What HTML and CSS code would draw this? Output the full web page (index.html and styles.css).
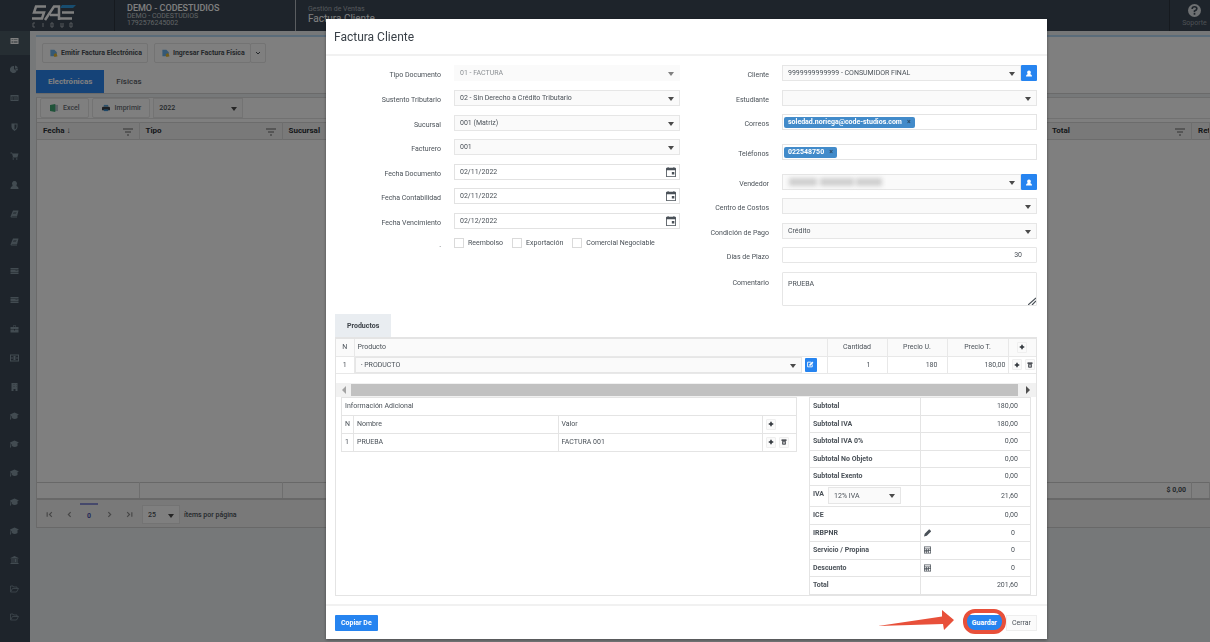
FILE: index.html
```html
<!DOCTYPE html>
<html lang="es">
<head>
<meta charset="utf-8">
<title>Factura Cliente</title>
<link rel="stylesheet" href="styles.css">
</head>
<body>
<svg class="sprite" aria-hidden="true">
  <symbol id="i-card" viewBox="0 0 16 16"><path d="M0 2h16v12H0zM2 5v1h3V5zm4 0v1h8V5zM2 8v1h3V8zm4 0v1h8V8zm-4 3v1h3v-1zm4 0v1h8v-1z" fill-rule="evenodd"/></symbol>
  <symbol id="i-pie" viewBox="0 0 16 16"><path d="M7 2v6l5 4A7 7 0 1 1 7 2zm2-1a7 7 0 0 1 6 6H9zM9 8h6a7 7 0 0 1-2 4z"/></symbol>
  <symbol id="i-list" viewBox="0 0 16 16"><path d="M0 2h16v12H0zm2 3v7h12V5zm1 1h2v1H3zm3 0h7v1H6zM3 8h2v1H3zm3 0h7v1H6zm-3 2h2v1H3zm3 0h7v1H6z" fill-rule="evenodd"/></symbol>
  <symbol id="i-shield" viewBox="0 0 16 16"><path d="M2 1h12v7q0 5-6 8-6-3-6-8zm6 2v10q4-2 4-5V3z" fill-rule="evenodd"/></symbol>
  <symbol id="i-cart" viewBox="0 0 16 16"><path d="M0 1h3l1 2h12l-2 7H5l0 1h9v1H4L5 10 3 3H0z"/><circle cx="5.500" cy="14" r="1.500"/><circle cx="12.500" cy="14" r="1.500"/></symbol>
  <symbol id="i-user" viewBox="0 0 16 16"><path d="M8 0a5 5 0 0 1 4 8l0 2q4 1 4 5v1H0v-1q0-4 4-5l0-2a5 5 0 0 1 4-8z"/></symbol>
  <symbol id="i-book" viewBox="0 0 16 16"><path d="M5 1h11l-3 12H3q-1 0-1 1h11v1H2q-2 0-2-2zm1 3v1h6V4zm-1 3v1h6V7z" fill-rule="evenodd"/></symbol>
  <symbol id="i-server" viewBox="0 0 16 16"><path d="M0 2h16v3H0zm0 4h16v4H0zm0 5h16v3H0zm10-4v1h4V7z" fill-rule="evenodd"/></symbol>
  <symbol id="i-case" viewBox="0 0 16 16"><path d="M5 4V1h6v3h5v5H9V8H7v1H0V4zm1-2v2h4V2zM0 10h7v1h2v-1h7v5H0z" fill-rule="evenodd"/></symbol>
  <symbol id="i-money" viewBox="0 0 18 14"><path d="M0 0h18v14H0zm2 2v10h14V2zm5 1h4v8H7zM3 5h2v4H3zm10 0h2v4h-2z" fill-rule="evenodd"/></symbol>
  <symbol id="i-building" viewBox="0 0 16 16"><path d="M2 0h12v16h-4v-4H6v4H2zm3 3v1h1V3zm3 0v1h1V3zm3 0v1h1V3zM5 7v1h1V7zm3 0v1h1V7zm3 0v1h1V7z" fill-rule="evenodd"/></symbol>
  <symbol id="i-cap" viewBox="0 0 18 14"><path d="M9 0l9 4-3 1v6q-6 4-11 0V7H3l-1 7H0l1-8-1-2z"/></symbol>
  <symbol id="i-bank" viewBox="0 0 16 16"><path d="M8 0l8 4v1H0V4zM2 6h2v6h2V6h2v6h1V6h2v6h1V6h2v6h1v1H1v-1h1zM0 14h16v2H0z"/></symbol>
  <symbol id="i-folder" viewBox="0 0 18 14"><path d="M1 12V1h5l1 2h7v3M1 13l4-7h12l-4 7z" fill="none" stroke="currentColor" stroke-width="1.500"/></symbol>
  <symbol id="i-filter" viewBox="0 0 10 8"><path d="M0 1h10M2 4h6M4 7h2" stroke="currentColor" fill="none"/></symbol>
  <symbol id="i-doc" viewBox="0 0 9 10"><path d="M0 1h5l3 3v5H0z" fill="#6db2ea"/><path d="M4 7l3-2 2 4-4 1z" fill="#eab92d"/></symbol>
  <symbol id="i-cal" viewBox="0 0 12 12"><path d="M2 0h1v1h6V0h1v1h1q1 0 1 1v9q0 1-1 1H1q-1 0-1-1V2q0-1 1-1h1zm-1 4v7h10V4zm6 2h3v3H7z" fill-rule="evenodd"/></symbol>
  <symbol id="i-plus" viewBox="0 0 8 8"><path d="M3 1h2v2h2v2H5v2H3V5H1V3h2z"/></symbol>
  <symbol id="i-trash" viewBox="0 0 8 8"><path d="M1 1h6v1H1zm1 2h4v4H2z" fill="none" stroke="currentColor"/><path d="M4 3v4" stroke="currentColor"/></symbol>
  <symbol id="i-calc" viewBox="0 0 10 10"><path d="M0 0h10v10H0zm1 1v2h8V1zm0 3v1h2V4zm3 0v1h2V4zm3 0v1h2V4zM1 6v1h2V6zm3 0v1h2V6zm3 0v3h2V6zM1 8v1h2V8zm3 0v1h2V8z" fill-rule="evenodd"/></symbol>
  <symbol id="i-pencil" viewBox="0 0 10 10"><path d="M0 10l1-4 5-5 3 3-5 5zM7 0l1 0 2 2v1L9 4 6 1z"/></symbol>
  <symbol id="i-edit" viewBox="0 0 12 12"><path d="M9 6v4H1V2h6" fill="none" stroke="currentColor" stroke-width="1.500"/><path d="M4 8V6l5-5 2 2-5 5z"/></symbol>
</svg>

<div class="app">
  <header class="topbar">
    <div class="topbar__logo">
      <svg viewBox="0 0 44 23" class="logo" role="img" aria-label="SAE Cloud">
        <g fill="none" stroke="#fff" stroke-width="2.500">
          <path d="M14 1.500H4L2 7.500h10l-2 6H0"/>
          <path d="M13 15L22 1.500h5V15M18 10h9"/>
          <path d="M42 7.500H30M40 13.500H28"/>
        </g>
        <path d="M30 0h14l-3 3H28z" fill="#2f9be0"/>
        <g fill="none" stroke="#aab1b8">
          <path d="M3 18H1v4h2M11 18v4M21 18h-2v4h2zM29 18v4h2v-4M38 18h2v4h-2z"/>
        </g>
      </svg>
    </div>
    <div class="topbar__company">
      <strong>DEMO - CODESTUDIOS</strong>
      <span>DEMO - CODESTUDIOS</span>
      <span>1792576245002</span>
    </div>
    <div class="topbar__page">
      <span>Gestión de Ventas</span>
      <strong>Factura Cliente</strong>
    </div>
    <a class="topbar__help" href="#soporte">
      <svg viewBox="0 0 14 14"><circle cx="7" cy="7" r="7" fill="currentColor"/><path d="M4.500 5.500q0-2.500 2.500-2.500t2.500 2q0 1.500-2.500 2.500v1M7 9.500v2" fill="none" stroke="#3c4856" stroke-width="1.800"/></svg>
      Soporte
    </a>
  </header>

  <div class="shell">
    <nav class="side" aria-label="Menú">
      <a href="#m1" class="side__item side__item--on"><svg><use href="#i-card"/></svg></a>
      <a href="#m2" class="side__item"><svg><use href="#i-pie"/></svg></a>
      <a href="#m3" class="side__item"><svg><use href="#i-list"/></svg></a>
      <a href="#m4" class="side__item"><svg><use href="#i-shield"/></svg></a>
      <a href="#m5" class="side__item"><svg><use href="#i-cart"/></svg></a>
      <a href="#m6" class="side__item"><svg><use href="#i-user"/></svg></a>
      <a href="#m7" class="side__item"><svg><use href="#i-book"/></svg></a>
      <a href="#m8" class="side__item"><svg><use href="#i-book"/></svg></a>
      <a href="#m9" class="side__item"><svg><use href="#i-server"/></svg></a>
      <a href="#m10" class="side__item"><svg><use href="#i-server"/></svg></a>
      <a href="#m11" class="side__item"><svg><use href="#i-case"/></svg></a>
      <a href="#m12" class="side__item"><svg><use href="#i-money"/></svg></a>
      <a href="#m13" class="side__item"><svg><use href="#i-building"/></svg></a>
      <a href="#m14" class="side__item"><svg><use href="#i-cap"/></svg></a>
      <a href="#m15" class="side__item"><svg><use href="#i-cap"/></svg></a>
      <a href="#m16" class="side__item"><svg><use href="#i-cap"/></svg></a>
      <a href="#m17" class="side__item"><svg><use href="#i-cap"/></svg></a>
      <a href="#m18" class="side__item"><svg><use href="#i-cap"/></svg></a>
      <a href="#m19" class="side__item"><svg><use href="#i-bank"/></svg></a>
      <a href="#m20" class="side__item"><svg><use href="#i-folder"/></svg></a>
      <a href="#m21" class="side__item"><svg><use href="#i-folder"/></svg></a>
    </nav>

    <main class="content">
      <section class="actions">
        <div class="actions__row">
          <button class="tool" type="button"><svg><use href="#i-doc"/></svg>Emitir Factura Electrónica</button>
          <div class="split">
            <button class="tool" type="button"><svg><use href="#i-doc"/></svg>Ingresar Factura Física</button>
            <button class="tool tool--more" type="button" aria-label="Más"><svg viewBox="0 0 8 8"><path d="M2 3l2 2 2-2" fill="none" stroke="currentColor"/></svg></button>
          </div>
        </div>
        <div class="tabs">
          <button class="tabs__tab tabs__tab--on" type="button">Electrónicas</button>
          <button class="tabs__tab" type="button">Físicas</button>
        </div>
      </section>

      <section class="grid">
        <div class="grid__tools">
          <button class="tool tool--light" type="button"><svg viewBox="0 0 9 9"><path d="M5 1h4v7H5z" fill="#b9c3ce"/><path d="M0 1l6-1v9l-6-1z" fill="#3fa673"/></svg>Excel</button>
          <button class="tool tool--light" type="button"><svg viewBox="0 0 9 9"><path d="M2 1h5v2H2z" fill="#5aa6de"/><path d="M0 4l1-1h7l1 1v3H0z" fill="#3c434b"/><path d="M2 6h5v2H2z" fill="#3a8fd0"/></svg>Imprimir</button>
          <span class="pick pick--year"><select aria-label="Año"><option>2022</option></select></span>
        </div>
        <table class="grid__head">
          <colgroup><col class="c-fecha"><col class="c-tipo"><col><col class="c-total"><col class="c-ret"></colgroup>
          <tr>
            <th><span>Fecha <i>↓</i></span><svg><use href="#i-filter"/></svg></th>
            <th><span>Tipo</span><svg><use href="#i-filter"/></svg></th>
            <th><span>Sucursal</span></th>
            <th><span>Total</span><svg><use href="#i-filter"/></svg></th>
            <th><span>Ret</span></th>
          </tr>
        </table>
        <div class="grid__body"></div>
        <table class="grid__foot">
          <colgroup><col class="c-fecha"><col class="c-tipo"><col><col class="c-total"><col class="c-ret"></colgroup>
          <tr><td></td><td></td><td></td><td>$ 0,00</td><td></td></tr>
        </table>
        <div class="pager">
          <button type="button" aria-label="Primera"><svg viewBox="0 0 6 6"><path d="M1 1v4M5 1L3 3l2 2" /></svg></button>
          <button type="button" aria-label="Anterior"><svg viewBox="0 0 6 6"><path d="M4 1L2 3l2 2" /></svg></button>
          <button type="button" class="pager__now">0</button>
          <button type="button" aria-label="Siguiente"><svg viewBox="0 0 6 6"><path d="M2 1l2 2-2 2" /></svg></button>
          <button type="button" aria-label="Última"><svg viewBox="0 0 6 6"><path d="M1 1l2 2-2 2M5 1v4" /></svg></button>
          <span class="pick pick--size"><select id="size"><option>25</option></select></span>
          <label for="size">ítems por página</label>
        </div>
      </section>
    </main>
  </div>
</div>

<div class="overlay">
  <div class="modal" role="dialog" aria-labelledby="modal-title">
    <header class="modal__head"><h1 id="modal-title">Factura Cliente</h1></header>

    <div class="modal__body">
      <form class="form">
        <div class="form__col">
          <div class="row row--a"><label for="tipo">Tipo Documento</label><span class="pick pick--off"><select id="tipo" disabled><option>01 - FACTURA</option></select></span></div>
          <div class="row row--a"><label for="sustento">Sustento Tributario</label><span class="pick"><select id="sustento"><option>02 - Sin Derecho a Crédito Tributario</option></select></span></div>
          <div class="row"><label for="sucursal">Sucursal</label><span class="pick"><select id="sucursal"><option>001 (Matriz)</option></select></span></div>
          <div class="row row--a"><label for="facturero">Facturero</label><span class="pick"><select id="facturero"><option>001</option></select></span></div>
          <div class="row"><label for="fdoc">Fecha Documento</label><span class="date"><input id="fdoc" type="text" value="02/11/2022"><button type="button" aria-label="Calendario"><svg><use href="#i-cal"/></svg></button></span></div>
          <div class="row row--a"><label for="fcon">Fecha Contabilidad</label><span class="date"><input id="fcon" type="text" value="02/11/2022"><button type="button" aria-label="Calendario"><svg><use href="#i-cal"/></svg></button></span></div>
          <div class="row"><label for="fven">Fecha Vencimiento</label><span class="date"><input id="fven" type="text" value="02/12/2022"><button type="button" aria-label="Calendario"><svg><use href="#i-cal"/></svg></button></span></div>
          <div class="row row--checks"><span class="dot">.</span>
            <div class="checks">
              <label><input type="checkbox">Reembolso</label>
              <label><input type="checkbox">Exportación</label>
              <label><input type="checkbox">Comercial Negociable</label>
            </div>
          </div>
        </div>

        <div class="form__col form__col--right">
          <div class="row row--a"><label for="cliente">Cliente</label><span class="join"><span class="pick"><select id="cliente"><option>9999999999999 - CONSUMIDOR FINAL</option></select></span><button type="button" class="blue blue--icon" aria-label="Ver cliente"><svg><use href="#i-user"/></svg></button></span></div>
          <div class="row"><label for="estudiante">Estudiante</label><span class="pick"><select id="estudiante"><option></option></select></span></div>
          <div class="row row--c"><span class="row__name">Correos</span><div class="chips"><span class="chip">soledad.noriega@code-studios.com<button type="button" aria-label="Quitar">×</button></span></div></div>
          <div class="row row--c"><span class="row__name">Teléfonos</span><div class="chips"><span class="chip">022548750<button type="button" aria-label="Quitar">×</button></span></div></div>
          <div class="row"><label for="vendedor">Vendedor</label><span class="join"><span class="pick"><select id="vendedor"><option></option></select><svg class="redacted" viewBox="0 0 94 8" aria-hidden="true"><path d="M0 0h28v8H0zM31 0h34v8H31zM67 0h26v8H67z"/></svg></span><button type="button" class="blue blue--icon" aria-label="Ver vendedor"><svg><use href="#i-user"/></svg></button></span></div>
          <div class="row row--a"><label for="centro">Centro de Costos</label><span class="pick"><select id="centro"><option></option></select></span></div>
          <div class="row"><label for="pago">Condición de Pago</label><span class="pick"><select id="pago"><option>Crédito</option></select></span></div>
          <div class="row row--a"><label for="plazo">Días de Plazo</label><input id="plazo" class="box box--num" type="text" value="30"></div>
          <div class="row row--area"><label for="comentario">Comentario</label><span class="area"><textarea id="comentario" class="box">PRUEBA</textarea><svg viewBox="0 0 8 8" aria-hidden="true"><path d="M0 8l8-7M4 8l4-4" fill="none" stroke="currentColor" stroke-width="1.200"/></svg></span></div>
        </div>
      </form>

      <button type="button" class="sheet-tab">Productos</button>
      <section class="sheet">
        <table class="items">
          <colgroup><col class="c-n"><col><col class="c-qty"><col class="c-qty"><col class="c-sum"><col class="c-act"></colgroup>
          <thead><tr><th class="mid">N</th><th>Producto</th><th class="mid">Cantidad</th><th class="mid">Precio U.</th><th class="mid">Precio T.</th><th class="mid"><button type="button" class="mini" aria-label="Agregar"><svg><use href="#i-plus"/></svg></button></th></tr></thead>
          <tbody><tr>
            <td class="mid">1</td>
            <td class="items__prod"><div><span class="pick"><select aria-label="Producto"><option>- PRODUCTO</option></select></span><button type="button" class="blue blue--edit" aria-label="Editar"><svg><use href="#i-edit"/></svg></button></div></td>
            <td class="num num--wide">1</td><td class="num">180</td><td class="num num--tight">180,00</td>
            <td class="mid"><div class="minis"><button type="button" class="mini" aria-label="Agregar"><svg><use href="#i-plus"/></svg></button><button type="button" class="mini" aria-label="Eliminar"><svg><use href="#i-trash"/></svg></button></div></td>
          </tr></tbody>
        </table>
        <div class="scroll">
          <svg viewBox="0 0 4 8"><path d="M4 0v8L0 4z" fill="#a3a3a3"/></svg>
          <div class="scroll__thumb"></div>
          <svg viewBox="0 0 4 8"><path d="M0 0v8l4-4z" fill="#505050"/></svg>
        </div>

        <div class="sheet__cols">
          <table class="extra">
            <colgroup><col class="c-idx"><col><col><col class="c-tools"></colgroup>
            <tr><td colspan="4">Información Adicional</td></tr>
            <tr><td>N</td><td>Nombre</td><td>Valor</td><td><div class="minis"><button type="button" class="mini" aria-label="Agregar"><svg><use href="#i-plus"/></svg></button></div></td></tr>
            <tr><td>1</td><td>PRUEBA</td><td>FACTURA 001</td><td><div class="minis"><button type="button" class="mini" aria-label="Agregar"><svg><use href="#i-plus"/></svg></button><button type="button" class="mini" aria-label="Eliminar"><svg><use href="#i-trash"/></svg></button></div></td></tr>
          </table>

          <table class="totals">
            <tr><th>Subtotal</th><td>180,00</td></tr>
            <tr><th>Subtotal IVA</th><td>180,00</td></tr>
            <tr><th>Subtotal IVA 0%</th><td>0,00</td></tr>
            <tr><th>Subtotal No Objeto</th><td>0,00</td></tr>
            <tr><th>Subtotal Exento</th><td>0,00</td></tr>
            <tr class="totals__iva"><th><div><label for="iva">IVA</label><span class="pick pick--iva"><select id="iva"><option>12% IVA</option></select></span></div></th><td>21,60</td></tr>
            <tr><th>ICE</th><td>0,00</td></tr>
            <tr><th>IRBPNR</th><td><div class="calc"><svg><use href="#i-pencil"/></svg>0</div></td></tr>
            <tr><th>Servicio / Propina</th><td><div class="calc"><svg><use href="#i-calc"/></svg>0</div></td></tr>
            <tr><th>Descuento</th><td><div class="calc"><svg><use href="#i-calc"/></svg>0</div></td></tr>
            <tr><th>Total</th><td>201,60</td></tr>
          </table>
        </div>
      </section>
    </div>

    <footer class="modal__foot">
      <button type="button" class="blue blue--copy">Copiar De</button>
      <div class="modal__end">
        <span class="marked">
          <svg class="marked__arrow" viewBox="0 0 76 20" aria-hidden="true"><path d="M0 16L64 6.500V0l12 10-10 10-1-6z" fill="#e8503a"/></svg>
          <button type="button" class="blue blue--save">Guardar</button>
        </span>
        <button type="button" class="plain">Cerrar</button>
      </div>
    </footer>
  </div>
</div>
</body>
</html>
```

FILE: styles.css
```css
* { box-sizing: border-box; }
body {
  margin: 0;
  font: 7px/10px Roboto, "Liberation Sans", sans-serif;
  color: #4a5158;
  background: #ecf0f3;
}
button, input, select, textarea { font: inherit; color: inherit; margin: 0; padding: 0; }
button { border: 0; background: none; cursor: pointer; }
svg { display: block; fill: currentColor; flex: none; }
a { color: inherit; text-decoration: none; }
table { border-collapse: collapse; table-layout: fixed; width: 100%; }
th, td { padding: 0; text-align: left; font-weight: 400; }
.sprite { position: absolute; width: 0; height: 0; }

/* Application shell */
.app { display: flex; flex-direction: column; height: 100vh; overflow: hidden; }
.topbar { display: flex; height: 31px; flex: none; background: #3c4856; color: #fff; }
.topbar__logo { width: 115px; padding: 5px 0 0 32px; border-right: 1px solid #2c343e; }
.logo { width: 44px; height: 23px; }
.topbar__company { width: 181px; padding: 3px 0 0 12px; border-right: 1px solid #b4bac0; display: flex; flex-direction: column; color: #c3c8cd; line-height: 7px; }
.topbar__company strong { font-size: 9px; line-height: 10px; font-weight: 500; color: #fff; }
.topbar__page { flex: 1; padding: 4px 0 0 12px; display: flex; flex-direction: column; color: #a9b0b7; }
.topbar__page strong { font-size: 10px; line-height: 9px; font-weight: 400; color: #fff; }
.topbar__help { width: 41px; flex: none; border-left: 1px solid #2c343e; padding-top: 4px; padding-left: 9px; display: flex; flex-direction: column; align-items: center; gap: 1px; color: #9aa1a8; white-space: nowrap; }
.topbar__help svg { width: 13px; height: 13px; color: #dde1e4; }

.shell { display: flex; flex: 1; min-height: 0; }
.side { width: 30px; flex: none; display: flex; flex-direction: column; padding-bottom: 10px; background: #3c4856; color: #8497a3; }
.side__item { flex: 1; display: flex; align-items: center; padding-left: 10px; }
.side__item svg { width: 9px; height: 8px; }
.side__item--on { flex: 0 0 24px; background: #4c5c66; color: #fff; padding-bottom: 5px; }

.content { flex: 1; min-width: 0; display: flex; flex-direction: column; gap: 3px; padding: 4px 0 114px 6px; }
.actions { flex: none; background: #fff; border-top: 2px solid #b5d8f5; border-bottom: 1px solid #d5d5d5; padding-top: 6px; }
.actions__row { display: flex; gap: 6px; padding-left: 6px; }
.split { display: flex; }
.tool { display: flex; align-items: center; gap: 3px; height: 20px; padding: 0 5px 0 7px; border: 1px solid #e6e6e6; border-radius: 2px; font-weight: 700; white-space: nowrap; color: #4a5056; }
.tool svg { width: 8px; height: 8px; }
.tool--more { width: 16px; padding: 0 3px; margin-left: -1px; }
.tool--light { padding: 0 8px 0 9px; gap: 5px; font-weight: 500; color: #6a7077; }
.tabs { display: flex; padding-top: 7px; }
.tabs__tab { height: 23px; padding: 0 12px; font-size: 8px; font-weight: 500; color: #5a6067; }
.tabs__tab--on { background: #2a86f0; color: #fff; font-weight: 700; }

.grid { flex: 1; min-height: 0; display: flex; flex-direction: column; background: #fff; border-top: 1px solid #dcdcdc; border-left: 1px solid #d5d5d5; }
.grid__tools { flex: none; display: flex; gap: 3px; padding: 0 3px; border-bottom: 1px solid #e2e2e2; margin-bottom: 3px; }
.grid__head, .grid__foot { flex: none; }
.grid__head { background: #f3f3f3; border-top: 1px solid #d8d8d8; border-bottom: 1px solid #d8d8d8; }
.grid__head th { position: relative; height: 17px; padding-left: 6px; border-right: 1px solid #dcdcdc; font-weight: 700; color: #2b3036; font-size: 8px; white-space: nowrap; overflow: hidden; }
.grid__head i { font-style: normal; font-weight: 400; }
.grid__head svg { position: absolute; right: 6px; top: 5px; width: 10px; height: 8px; color: #666; }
.c-fecha { width: 102px; }
.c-tipo { width: 143px; }
.c-total { width: 146px; }
.c-ret { width: 18px; }
.grid__body { flex: 1; }
.grid__foot { border-top: 1px solid #d0d0d0; border-bottom: 2px solid #d0d0d0; }
.grid__foot td { height: 17px; border-right: 1px solid #dcdcdc; text-align: right; padding-right: 5px; font-weight: 700; }
.pager { flex: none; height: 28px; display: flex; align-items: center; gap: 2px; padding: 2px 3px 0; background: #f2f2f2; border-bottom: 1px solid #d0d0d0; font-weight: 500; }
.pager button { width: 18px; height: 20px; display: grid; place-items: center; }
.pager svg { width: 7px; height: 7px; fill: none; stroke: #8d8d8d; }
.pager .pager__now { height: 24px; border-top: 2px solid #8c93d8; color: #4a50b0; font-weight: 700; }

/* Shared controls */
.pick { position: relative; display: block; flex: 1; min-width: 0; height: 16px; border: 1px solid #e6e6e6; background: #fafafa; }
.pick select { display: block; width: 100%; height: 100%; padding: 0 16px 0 5px; border: 0; background: none; appearance: none; }
.pick::after { content: ""; position: absolute; right: 5px; top: 6px; border: 3px solid transparent; border-top: 4px solid #4a4a4a; border-bottom: 0; pointer-events: none; }
.pick--off { border-color: #fafafa; color: #8c9094; }
.pick--off select { opacity: 1; }
.pick--off::after { border-top-color: #808080; }
.pick--year { flex: none; width: 90px; height: 20px; font-weight: 500; }
.pick--year::after { top: 8px; }
.pick--size { flex: none; width: 38px; height: 19px; margin-left: 2px; background: #fff; }
.pick--size::after { top: 8px; }
.pager label { margin-left: 2px; }
.pick--iva { flex: none; width: 73px; height: 17px; }
.box { width: 100%; border: 1px solid #e6e6e6; background: #fff; height: 16px; padding: 0 5px; border-radius: 1px; }
.box--num { text-align: right; padding-right: 14px; }
.blue { display: grid; place-items: center; background: #2684f0; color: #fff; font-weight: 700; border-radius: 1px; }
.blue--icon { width: 16px; height: 16px; flex: none; }
.blue--icon svg { width: 6px; height: 7px; }

/* Dialog */
.overlay { position: fixed; inset: 0; display: flex; align-items: flex-start; padding: 19px 163px 0 326px; background: rgba(0, 0, 0, .5); overflow: auto; }
.modal { flex: 1; min-width: 0; background: #fff; box-shadow: 0 1px 3px rgba(0, 0, 0, .4); }
.modal__head { height: 37px; padding: 10px 8px 0; border-bottom: 2px solid #f1f1f1; }
.modal__head h1 { margin: 0; font-size: 12px; line-height: 16px; font-weight: 400; color: #3a4148; }
.modal__body { padding: 9px 10px 8px 9px; }

.form { display: grid; grid-template-columns: 345fr 357fr; padding-bottom: 8px; }
.row { display: grid; grid-template-columns: 106px 1fr; column-gap: 13px; align-items: start; height: 24px; }
.form__col--right .row { grid-template-columns: 89px 1fr; }
.row--a { height: 25px; }
.form .row--c { height: 30px; }
.row > label, .row__name { text-align: right; padding-top: 5px; white-space: nowrap; }
.form .row--area { height: auto; }
.row--area > label { padding-top: 6px; }
.form .row--checks { height: auto; padding-top: 1px; }
.dot { text-align: right; padding-top: 2px; }
.checks { display: flex; gap: 9px; }
.checks label { display: flex; align-items: center; gap: 4px; white-space: nowrap; }
.checks input { appearance: none; width: 10px; height: 10px; border: 1px solid #dadada; background: #fff; }
.date { display: flex; height: 16px; border: 1px solid #e2e2e2; }
.date input { flex: 1; min-width: 0; border: 0; padding: 0 5px; background: none; }
.date button { width: 16px; display: grid; place-items: center; }
.date svg { width: 10px; height: 10px; }
.join { display: flex; }
.redacted { position: absolute; left: 6px; top: 3px; width: 94px; height: 8px; fill: #cfcfcf; filter: blur(2px); }
.chips { display: flex; align-items: center; height: 16px; padding: 0 1px; border: 1px solid #e4e4e4; }
.chip { display: flex; align-items: center; gap: 5px; height: 11px; padding: 0 4px; border-radius: 2px; background: #428bca; color: #fff; font-weight: 700; white-space: nowrap; }
.chip button { color: #2c4a66; line-height: 10px; }
.area { position: relative; display: block; }
.area textarea { display: block; height: 34px; padding: 6px 5px; resize: none; }
.area svg { position: absolute; right: 1px; bottom: 1px; width: 8px; height: 8px; }

.sheet-tab { display: block; height: 23px; padding: 0 12px; background: #e9edf1; font-weight: 700; color: #3c4248; }
.sheet { border: 1px solid #e4e4e4; border-top-width: 2px; }
.items th { height: 17px; background: #fafafa; }
.items td { height: 17px; }
.items th, .items td { padding: 0 3px; border-right: 1px solid #e8e8e8; border-bottom: 1px solid #e8e8e8; }
.items th:last-child, .items td:last-child { border-right: 0; padding: 0; }
.items .mid { text-align: center; }
.items .num { text-align: right; padding-right: 9px; }
.items .num--wide { padding-right: 16px; }
.items .num--tight { padding-right: 2px; }
.items .items__prod { padding: 0 10px 0 0; }
.items__prod div { display: flex; gap: 3px; }
.blue--edit { width: 12px; height: 14px; margin-top: 1px; }
.blue--edit svg { width: 7px; height: 7px; }
.c-n { width: 18px; }
.c-qty { width: 60px; }
.c-sum { width: 61px; }
.c-act { width: 28px; }
.mini { display: inline-grid; place-items: center; width: 10px; height: 11px; border: 1px solid #efefef; background: #fafafa; border-radius: 1px; vertical-align: middle; color: #2d3238; }
.mini svg { width: 6px; height: 6px; }
.minis { display: flex; gap: 3px; padding-left: 3px; }
.scroll { display: flex; align-items: center; gap: 5px; height: 14px; margin-top: 9px; padding: 0 6px; background: #f1f1f1; }
.scroll svg { width: 4px; height: 8px; }
.scroll__thumb { flex: 1; height: 12px; background: #c1c1c1; }
.scroll svg:last-child { margin-left: 3px; }

.sheet__cols { display: grid; grid-template-columns: 456fr 222fr; column-gap: 12px; align-items: start; padding: 0 5px; }
.extra td { height: 18px; padding: 0 3px; border: 1px solid #e4e4e4; }
.extra td:last-child .minis { padding-left: 0; }
.c-idx { width: 12px; }
.c-tools { width: 34px; }
.totals th, .totals td { height: 17px; padding: 0 3px; border: 1px solid #e4e4e4; }
.totals tr:nth-child(odd) > * { height: 18px; }
.totals .totals__iva > * { height: 21px; }
.totals th { font-weight: 700; }
.totals td { text-align: right; padding-right: 12px; }
.totals__iva div { display: flex; gap: 4px; font-weight: 400; }
.totals__iva label { font-weight: 700; padding-top: 2px; }
.calc { display: flex; justify-content: space-between; align-items: center; padding-right: 3px; }
.calc svg { width: 7px; height: 8px; }

.modal__foot { display: flex; justify-content: space-between; padding: 9px 10px 8px 9px; border-top: 2px solid #f1f1f1; }
.blue--copy { height: 16px; padding: 0 6px; }
.modal__end { display: flex; gap: 4px; }
.marked { position: relative; display: block; }
.marked::before { content: ""; position: absolute; inset: -6px -4px -3px; border: 4px solid #e8503a; border-radius: 12px; pointer-events: none; }
.marked__arrow { position: absolute; right: calc(100% + 13px); top: -5px; width: 76px; height: 20px; }
.blue--save { height: 16px; padding: 0 5px; }
.plain { height: 16px; padding: 0 5px; border: 1px solid #eee; background: #fbfbfb; }
```
